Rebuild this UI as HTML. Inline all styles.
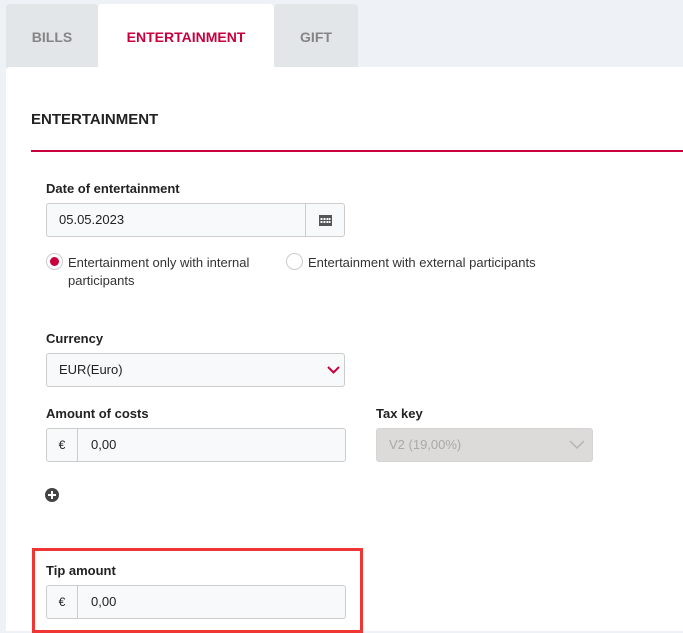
<!DOCTYPE html>
<html><head><style>
*{box-sizing:border-box;margin:0;padding:0}
body{width:683px;height:631px;overflow:hidden;background:#eef1f5;font-family:"Liberation Sans",sans-serif;position:relative;font-size:13px;color:#222}
.a{position:absolute}
.tab{position:absolute;top:4px;height:64px;background:#e2e6e9;border-radius:4px 4px 0 0;font-weight:bold;font-size:14px;color:#858585;text-align:center;line-height:66px}
.lbl{position:absolute;font-weight:bold;font-size:13px;color:#222}
.inp{position:absolute;border:1px solid #ccc;border-radius:3px;background:#f8f9fa;height:34px}
.eur{position:absolute;left:0;top:0;width:31px;height:32px;border-right:1px solid #ccc;text-align:center;line-height:32px;font-size:12px}
.val{position:absolute;top:0;line-height:32px;font-size:13px}
</style></head><body>
<div class="tab" style="left:6px;width:92px">BILLS</div>
<div class="tab" style="left:98px;width:176px;background:#fff;color:#c8003c;height:66px">ENTERTAINMENT</div>
<div class="tab" style="left:274px;width:84px">GIFT</div>
<div class="a" style="left:6px;top:67px;width:677px;height:564px;background:#fff;border-radius:4px 0 0 0"></div>
<div class="a" style="left:31px;top:111px;font-weight:bold;font-size:15px;color:#222">ENTERTAINMENT</div>
<div class="a" style="left:31px;top:150px;width:652px;height:2px;background:#c8003c"></div>

<div class="lbl" style="left:46px;top:181px">Date of entertainment</div>
<div class="inp" style="left:46px;top:203px;width:299px">
<div class="val" style="left:12px">05.05.2023</div>
<div class="a" style="left:258px;top:0;width:1px;height:32px;background:#ccc"></div>
<svg class="a" style="left:272px;top:10px" width="13" height="12" viewBox="0 0 13 12"><rect x="0" y="1" width="13" height="11" fill="#555"/><g fill="#f8f9fa"><rect x="1.5" y="4" width="2" height="2"/><rect x="4.5" y="4" width="2" height="2"/><rect x="7.5" y="4" width="2" height="2"/><rect x="10" y="4" width="1.5" height="2"/><rect x="1.5" y="7" width="2" height="2"/><rect x="4.5" y="7" width="2" height="2"/><rect x="7.5" y="7" width="2" height="2"/><rect x="10" y="7" width="1.5" height="2"/></g></svg>
</div>
<div class="a" style="left:46px;top:253px;width:17px;height:17px;border-radius:50%;border:1px solid #ccc;background:#fff"><div class="a" style="left:3px;top:3px;width:9px;height:9px;border-radius:50%;background:#c8003c"></div></div>
<div class="a" style="left:68px;top:254px;line-height:18px;color:#333">Entertainment only with internal<br>participants</div>
<div class="a" style="left:286px;top:253px;width:17px;height:17px;border-radius:50%;border:1px solid #ccc;background:#fff"></div>
<div class="a" style="left:308px;top:254px;line-height:18px;color:#333">Entertainment with external participants</div>

<div class="lbl" style="left:46px;top:331px">Currency</div>
<div class="inp" style="left:46px;top:353px;width:299px">
<div class="val" style="left:12px">EUR(Euro)</div>
<svg class="a" style="left:280px;top:12px" width="13" height="8" viewBox="0 0 13 8"><path d="M1 1L6.5 6.5L12 1" stroke="#c8003c" stroke-width="2" fill="none"/></svg>
</div>

<div class="lbl" style="left:46px;top:406px">Amount of costs</div>
<div class="inp" style="left:46px;top:428px;width:300px"><div class="eur">€</div><div class="val" style="left:44px">0,00</div></div>
<div class="lbl" style="left:376px;top:406px">Tax key</div>
<div class="inp" style="left:376px;top:428px;width:217px;background:#dcdbda;border-color:#d5d5d5">
<div class="val" style="left:12px;color:#a9a9a9">V2 (19,00%)</div>
<svg class="a" style="left:192px;top:11px" width="16" height="9" viewBox="0 0 16 9"><path d="M1 1L8 8L15 1" stroke="#b5b5b5" stroke-width="1.5" fill="none"/></svg>
</div>
<div class="a" style="left:45px;top:488px;width:14px;height:14px;border-radius:50%;background:#444"><div class="a" style="left:3px;top:6px;width:8px;height:2px;background:#fff"></div><div class="a" style="left:6px;top:3px;width:2px;height:8px;background:#fff"></div></div>

<div class="a" style="left:32px;top:548px;width:331px;height:85px;border:3px solid #f03535"></div>
<div class="lbl" style="left:46px;top:563px">Tip amount</div>
<div class="inp" style="left:46px;top:585px;width:300px"><div class="eur">€</div><div class="val" style="left:44px">0,00</div></div>
</body></html>
